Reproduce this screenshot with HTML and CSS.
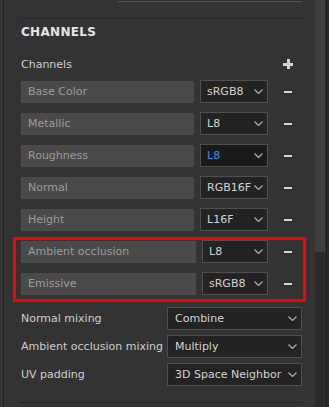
FILE: index.html
```html
<!DOCTYPE html>
<html lang="en">
<head>
    <meta charset="UTF-8">
    <meta name="viewport" content="width=device-width, initial-scale=1.0">
    <title>Channels</title>
    <link rel="stylesheet" href="styles.css">
</head>
<body>
    <div class="edge-left"></div>
    <div class="panel">
        <div class="top-field"></div>
        <div class="separator"></div>
        <h2 class="heading">CHANNELS</h2>
        <div class="channels-head">
            <span>Channels</span>
            <span class="plus"></span>
        </div>

        <div class="channel">
            <div class="name">Base Color</div>
            <div class="select">sRGB8<svg width="9" height="5" viewBox="0 0 9 5"><polyline points="0.5,0.5 4.5,4.5 8.5,0.5"/></svg></div>
            <span class="minus"></span>
        </div>
        <div class="channel">
            <div class="name">Metallic</div>
            <div class="select">L8<svg width="9" height="5" viewBox="0 0 9 5"><polyline points="0.5,0.5 4.5,4.5 8.5,0.5"/></svg></div>
            <span class="minus"></span>
        </div>
        <div class="channel">
            <div class="name">Roughness</div>
            <div class="select active">L8<svg width="9" height="5" viewBox="0 0 9 5"><polyline points="0.5,0.5 4.5,4.5 8.5,0.5"/></svg></div>
            <span class="minus"></span>
        </div>
        <div class="channel">
            <div class="name">Normal</div>
            <div class="select">RGB16F<svg width="9" height="5" viewBox="0 0 9 5"><polyline points="0.5,0.5 4.5,4.5 8.5,0.5"/></svg></div>
            <span class="minus"></span>
        </div>
        <div class="channel">
            <div class="name">Height</div>
            <div class="select">L16F<svg width="9" height="5" viewBox="0 0 9 5"><polyline points="0.5,0.5 4.5,4.5 8.5,0.5"/></svg></div>
            <span class="minus"></span>
        </div>

        <div class="highlight">
            <div class="channel">
                <div class="name">Ambient occlusion</div>
                <div class="select">L8<svg width="9" height="5" viewBox="0 0 9 5"><polyline points="0.5,0.5 4.5,4.5 8.5,0.5"/></svg></div>
                <span class="minus"></span>
            </div>
            <div class="channel">
                <div class="name">Emissive</div>
                <div class="select">sRGB8<svg width="9" height="5" viewBox="0 0 9 5"><polyline points="0.5,0.5 4.5,4.5 8.5,0.5"/></svg></div>
                <span class="minus"></span>
            </div>
        </div>

        <div class="option">
            <span>Normal mixing</span>
            <div class="select">Combine<svg width="9" height="5" viewBox="0 0 9 5"><polyline points="0.5,0.5 4.5,4.5 8.5,0.5"/></svg></div>
        </div>
        <div class="option">
            <span>Ambient occlusion mixing</span>
            <div class="select">Multiply<svg width="9" height="5" viewBox="0 0 9 5"><polyline points="0.5,0.5 4.5,4.5 8.5,0.5"/></svg></div>
        </div>
        <div class="option">
            <span>UV padding</span>
            <div class="select">3D Space Neighbor<svg width="9" height="5" viewBox="0 0 9 5"><polyline points="0.5,0.5 4.5,4.5 8.5,0.5"/></svg></div>
        </div>
        <div class="separator bottom"></div>
    </div>
    <div class="scrollbar">
        <div class="thumb"></div>
    </div>
    <div class="edge-right"></div>
</body>
</html>
```

FILE: styles.css
```css
html, body{
    margin: 0;
    height: 100%;
}
body{
    display: flex;
    background-color: #333333;
    font-family: 'DejaVu Sans', Verdana, sans-serif;
    font-size: 11px;
    color: #d0d0d0;
    overflow: hidden;
}
.edge-left{
    width: 3px;
    border-right: 1px solid #1e1e1e;
}
.panel{
    flex: 1;
    padding: 0 13px 0 17px;
    display: flex;
    flex-direction: column;
}
.top-field{
    height: 1px;
    margin-left: 97px;
    background-color: #2b2b2b;
    border-bottom: 1px solid #555555;
}
.separator{
    height: 1px;
    margin-top: 16px;
    background-color: #262626;
}
.separator.bottom{
    margin-top: 16px;
}
.heading{
    margin: 6px 0 0;
    font-size: 12px;
    line-height: 14px;
    font-weight: bold;
    color: #e6e6e6;
    letter-spacing: 0.3px;
}
.channels-head{
    display: flex;
    justify-content: space-between;
    align-items: center;
    height: 16px;
    margin-top: 17px;
}
.plus{
    position: relative;
    width: 10px;
    height: 10px;
    margin-right: 9px;
}
.plus::before, .plus::after{
    content: '';
    position: absolute;
    background-color: #d4d4d4;
}
.plus::before{
    left: 0;
    top: 4px;
    width: 10px;
    height: 3px;
}
.plus::after{
    left: 4px;
    top: 0;
    width: 3px;
    height: 10px;
}
.channel{
    display: grid;
    grid-template-columns: 1fr 74px 34px;
    align-items: end;
    height: 23px;
    margin-top: 9px;
}
.channels-head + .channel{
    margin-top: 8px;
}
.name{
    height: 22px;
    line-height: 22px;
    padding-left: 7px;
    background-color: #4a4a4a;
    color: #9c9c9c;
    white-space: nowrap;
    overflow: hidden;
}
.select{
    height: 21px;
    display: flex;
    align-items: center;
    justify-content: space-between;
    padding: 0 4px 0 6px;
    background-color: #232323;
    border: 1px solid #4f4f4f;
    color: #d4d4d4;
    white-space: nowrap;
}
.channel .select{
    margin-left: 6px;
}
.select svg{
    flex: none;
    fill: none;
    stroke: #a8a8a8;
    stroke-width: 1.4;
}
.select.active{
    background-color: #1a1a1a;
    color: #3a8fe6;
}
.minus{
    justify-self: start;
    align-self: center;
    width: 8px;
    height: 2px;
    margin-left: 16px;
    background-color: #d4d4d4;
}
.highlight{
    margin: 6px -4px 0 -8px;
    padding: 0 1px 4px 5px;
    border: 3px solid #ff0000;
}
.highlight .channel{
    grid-template-columns: 1fr 72px 34px;
}
.highlight .channel:first-child{
    margin-top: 0;
}
.option{
    display: flex;
    justify-content: space-between;
    align-items: center;
    height: 23px;
    margin-top: 5px;
}
.option .select{
    width: 122px;
    padding: 0 4px 0 7px;
}
.scrollbar{
    width: 11px;
    background-color: #2a2a2a;
}
.thumb{
    height: 252px;
    width: 10px;
    background-color: #3f3f3f;
}
.edge-right{
    width: 2px;
    border-left: 1px solid #1c1c1c;
    background-color: #2a2a2a;
}
```
